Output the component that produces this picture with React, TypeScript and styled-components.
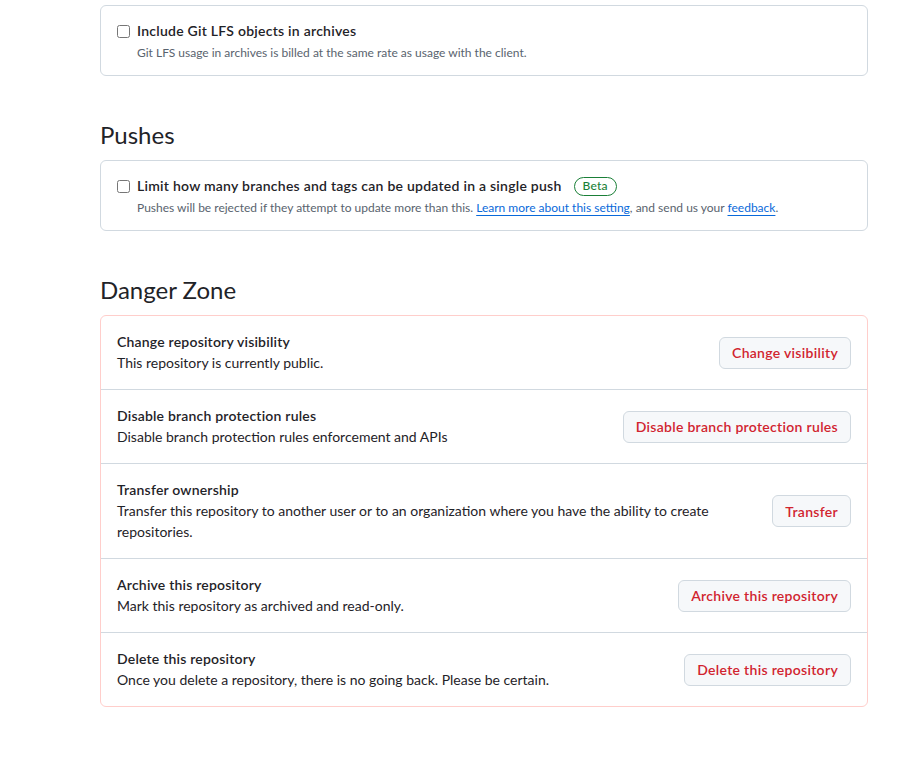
import React from "react";
import styled, { createGlobalStyle } from "styled-components";

const GlobalStyle = createGlobalStyle`
  html, body { margin: 0; padding: 0; background: #ffffff; }
  body {
    font-family: "Lato", "Noto Sans", "Liberation Sans", sans-serif;
    color: #1f2328;
    font-size: 14px;
    line-height: 1.5;
  }
  * { box-sizing: border-box; }
`;

const Page = styled.div`
  padding: 5px 0 40px 100px;
  width: 868px;
`;

const Box = styled.div<{ $danger?: boolean }>`
  border: 1px solid ${(p) => (p.$danger ? "#ffcecb" : "#d1d9e0")};
  border-radius: 6px;
  background: #fff;
`;

const CheckRow = styled.div`
  padding: 15px 16px 13px;
`;

const CheckLabel = styled.label`
  display: flex;
  align-items: center;
  font-weight: 600;
  font-size: 14px;
  line-height: 20px;
  letter-spacing: 0.25px;
`;

const Check = styled.input`
  width: 13px;
  height: 13px;
  margin: 0 7px 0 0;
`;

const Note = styled.p`
  margin: 3px 0 0 20px;
  font-size: 12px;
  line-height: 18px;
  color: #59636e;
`;

const Link = styled.a`
  color: #0969da;
  text-decoration: underline;
  text-underline-offset: 3px;
`;

const Badge = styled.span`
  display: inline-flex;
  align-items: center;
  margin-left: 12px;
  height: 19px;
  padding: 0 8px;
  border: 1px solid #1a7f37;
  border-radius: 999px;
  color: #1a7f37;
  font-size: 12px;
  font-weight: 500;
  letter-spacing: 0.2px;
`;

const Heading = styled.h2`
  margin: 41px 0 7px;
  font-size: 24px;
  line-height: 36px;
  font-weight: 400;
  color: #1f2328;
`;

const DangerRow = styled.div`
  display: flex;
  align-items: center;
  justify-content: space-between;
  gap: 16px;
  padding: 16px;
  & + & { border-top: 1px solid #d1d9e0; }
`;

const RowText = styled.div`
  flex: 1;
  min-width: 0;
`;

const RowTitle = styled.div`
  font-weight: 600;
  font-size: 14px;
  line-height: 20px;
  letter-spacing: 0.2px;
`;

const RowDesc = styled.div`
  font-size: 14px;
  line-height: 21px;
  padding-right: 40px;
`;

const DangerButton = styled.button`
  flex-shrink: 0;
  height: 32px;
  padding: 0 12px;
  border: 1px solid #d1d9e0;
  border-radius: 6px;
  background: #f6f8fa;
  color: #d1242f;
  font-family: inherit;
  font-size: 14px;
  font-weight: 600;
  letter-spacing: 0.3px;
  cursor: pointer;
`;

const rows = [
  {
    title: "Change repository visibility",
    desc: "This repository is currently public.",
    action: "Change visibility",
  },
  {
    title: "Disable branch protection rules",
    desc: "Disable branch protection rules enforcement and APIs",
    action: "Disable branch protection rules",
  },
  {
    title: "Transfer ownership",
    desc: "Transfer this repository to another user or to an organization where you have the ability to create repositories.",
    action: "Transfer",
  },
  {
    title: "Archive this repository",
    desc: "Mark this repository as archived and read-only.",
    action: "Archive this repository",
  },
  {
    title: "Delete this repository",
    desc: "Once you delete a repository, there is no going back. Please be certain.",
    action: "Delete this repository",
  },
];

export default function App() {
  return (
    <>
      <GlobalStyle />
      <Page>
        <Box>
          <CheckRow>
            <CheckLabel>
              <Check type="checkbox" />
              Include Git LFS objects in archives
            </CheckLabel>
            <Note>Git LFS usage in archives is billed at the same rate as usage with the client.</Note>
          </CheckRow>
        </Box>

        <Heading>Pushes</Heading>
        <Box>
          <CheckRow>
            <CheckLabel>
              <Check type="checkbox" />
              Limit how many branches and tags can be updated in a single push
              <Badge>Beta</Badge>
            </CheckLabel>
            <Note>
              Pushes will be rejected if they attempt to update more than this.{" "}
              <Link href="#">Learn more about this setting</Link>, and send us your{" "}
              <Link href="#">feedback</Link>.
            </Note>
          </CheckRow>
        </Box>

        <Heading>Danger Zone</Heading>
        <Box $danger>
          {rows.map((r) => (
            <DangerRow key={r.title}>
              <RowText>
                <RowTitle>{r.title}</RowTitle>
                <RowDesc>{r.desc}</RowDesc>
              </RowText>
              <DangerButton>{r.action}</DangerButton>
            </DangerRow>
          ))}
        </Box>
      </Page>
    </>
  );
}
